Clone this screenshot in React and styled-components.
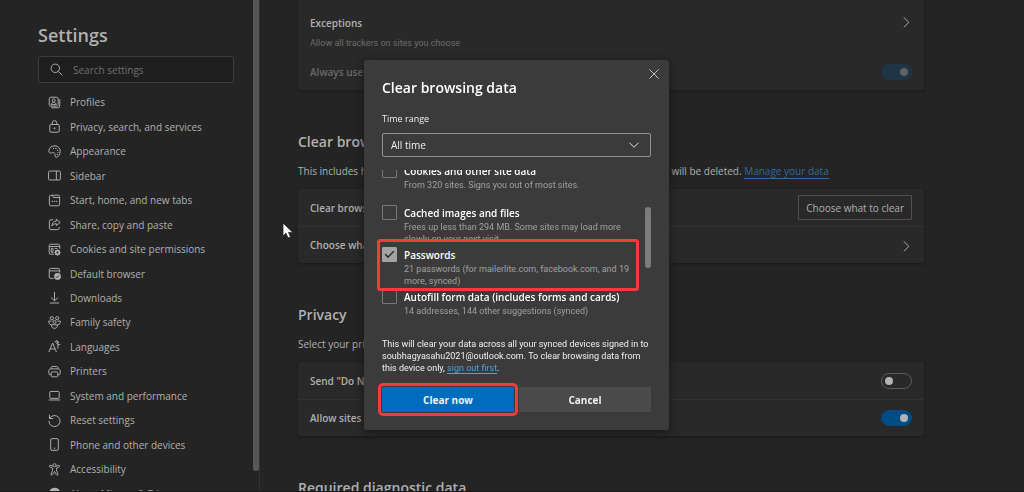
import React, { useState } from 'react';
import styled, { createGlobalStyle, css } from 'styled-components';

const fontStack = '"Open Sans", "Noto Sans", sans-serif';
const smallFont = 'Roboto, "Open Sans", sans-serif';
const pageColor = '#242424';
const cardColor = '#292929';
const dialogColor = '#3b3b3b';
const markColor = '#f23b3b';

const icons = {
  profiles: (
    <>
      <rect x="1.5" y="1.5" width="11" height="11" rx="2" />
      <path d="M14.5 4v8.3a2.2 2.2 0 0 1-2.2 2.2H4" />
      <circle cx="7" cy="5.4" r="1.8" />
      <path d="M3.8 10.6c.3-3.4 6.1-3.4 6.4 0z" />
    </>
  ),
  lock: (
    <>
      <rect x="2.2" y="5.5" width="11.6" height="9.5" rx="1.5" />
      <path d="M5.2 5.5V3.6a2.8 2.8 0 0 1 5.6 0v1.9" />
      <circle cx="8" cy="10.2" r="0.7" fill="currentColor" />
    </>
  ),
  palette: (
    <>
      <path d="M1 7.6C1.2 3.2 5 .8 8.6 1c4 .2 6.6 3.4 6.4 7.2-.2 3.8-2.4 6.8-4.6 6.8-2.3 0-1.3-2.6-2-4.4-.8-2-2.3-1.2-4-.8C2.4 10.3.9 9.5 1 7.6z" />
      <path d="M6.8 4.2h.1M9.7 4.2h.1M11.8 6.2h.1M12.3 9h.1M11.4 11.6h.1" strokeWidth="1.5" strokeLinecap="round" />
    </>
  ),
  sidebar: (
    <>
      <rect x="0.7" y="2.5" width="14.6" height="11" rx="1.5" />
      <path d="M10.3 2.5v11" />
    </>
  ),
  tabs: (
    <>
      <rect x="1.7" y="1.5" width="12.6" height="13" rx="1.8" />
      <path d="M5.8 1.5v1.3c0 1 .5 1.5 1.5 1.5h7" />
      <path d="M4.5 9h1.5M7.3 9h1.5M10 9h1.5" strokeWidth="1.6" />
    </>
  ),
  share: (
    <>
      <path d="M6.5 2.2H3.7a2 2 0 0 0-2 2v8.1a2 2 0 0 0 2 2h8.1a2 2 0 0 0 2-2V11" />
      <path d="M10.2 1.5 15 5.4l-4.8 3.9V7C7.6 7 6 8 4.8 10c.2-3.6 2-6 5.4-6.2z" />
    </>
  ),
  cookies: (
    <>
      <path d="M7.5 13.8H3.2a1.7 1.7 0 0 1-1.7-1.7V3.2c0-1 .7-1.7 1.7-1.7h9.6c1 0 1.7.7 1.7 1.7v4" />
      <path d="M1.5 4.3h13M4 6.5h2.2v5H4zM8.3 6.7h3.2" />
      <circle cx="11.7" cy="11.7" r="2.3" strokeWidth="2" />
      <path d="M11.7 7.8v2M11.7 13.6v2M7.8 11.7h2M13.6 11.7h2M9 9l1.2 1.2M14.4 9l-1.2 1.2M9 14.4l1.2-1.2M14.4 14.4l-1.2-1.2" />
    </>
  ),
  browser: (
    <>
      <path d="M6.8 14H3.3a1.8 1.8 0 0 1-1.8-1.8V3.5c0-1 .8-1.8 1.8-1.8h9.2c1 0 1.8.8 1.8 1.8v3.3M1.5 4.8h12.8" />
      <circle cx="11.7" cy="11.6" r="4.2" fill="currentColor" stroke="none" />
      <path d="m9.8 11.7 1.3 1.3 2.5-2.6" stroke={pageColor} />
    </>
  ),
  download: <path d="M8 1v11M3.8 8 8 12.2 12.2 8M2.2 14.8h11.6" />,
  family: (
    <>
      <circle cx="4.7" cy="2.7" r="2" />
      <circle cx="11.3" cy="2.7" r="2" />
      <circle cx="8" cy="7.3" r="1.9" />
      <path d="M4.2 6.3H.8c-.2 2.5 1 4.3 3.2 4.5M11.8 6.3h3.4c.2 2.5-1 4.3-3.2 4.5M4.3 10.8h7.4c.2 2.8-1.3 4.4-3.7 4.4s-3.9-1.6-3.7-4.4z" />
    </>
  ),
  languages: (
    <>
      <path d="M1 14.8 5.7 3.8l4.7 11M2.7 11h6" />
      <path d="M7.8 2.2h4.4v8.3M12.2 5.5H15M10.2.6l2.6 1.6-2.6 3" />
    </>
  ),
  printer: (
    <>
      <path d="M3.8 12H2.6C1.6 12 1 11.4 1 10.4V7c0-1.3.8-2.2 2.2-2.2h9.6C14.2 4.8 15 5.7 15 7v3.4c0 1-.6 1.6-1.6 1.6h-1.2" />
      <path d="M3.8 4.8V3.4c0-1 .6-1.6 1.5-1.6h5.4c.9 0 1.5.6 1.5 1.6v1.4" />
      <rect x="4" y="8.5" width="8" height="6" rx="1.2" />
    </>
  ),
  laptop: (
    <>
      <rect x="2.2" y="3" width="11.6" height="8.5" rx="1.2" />
      <path d="M.8 13.5h14.4" />
    </>
  ),
  reset: <path d="M1.8 1v4.6h4.6M2 5.5A6.8 6.8 0 1 1 1.2 8.5" />,
  phone: (
    <>
      <rect x="3.3" y="0.8" width="9.4" height="14.4" rx="1.6" />
      <path d="M7 12.5h2" />
    </>
  ),
  accessibility: (
    <>
      <circle cx="8" cy="2.7" r="1.9" />
      <path d="M6.2 4 3 2.9c-1.3-.4-2 1.3-.8 1.9l3.3 1.5v3L3.8 13.5c-.5 1.4 1.3 2.2 1.9.8L8 10.5l2.3 3.8c.6 1.4 2.4.6 1.9-.8L10.5 9.3v-3l3.3-1.5c1.2-.6.5-2.3-.8-1.9L9.8 4" />
    </>
  ),
  edge: (
    <path
      d="M1 8.5C1 4 4.4 1 8.3 1 12.3 1 15 3.8 15 6.8c0 2.2-1.6 3.4-3.5 3.4-1.5 0-2.5-.5-2.5-1.2 0-.5.5-.8.5-1.6 0-1.2-1.2-2.3-3-2.3C4 5.1 1.5 6.5 1 8.5zM1.2 9c1-2.5 2.8-3.3 4.2-3.2C4 8 4.5 12.5 9 14.9 4.8 15.5 1.4 12.6 1.2 9z"
      fill="currentColor"
      stroke="none"
    />
  ),
  search: (
    <>
      <circle cx="6.5" cy="6.5" r="5.2" />
      <path d="m10.4 10.4 4.8 4.8" />
    </>
  ),
  right: <path d="m6 3 6 6-6 6" />,
  down: <path d="m2 5 6 6 6-6" />,
  close: <path d="m2 2 12 12M14 2 2 14" />,
};

const menu = [
  ['profiles', 'Profiles'],
  ['lock', 'Privacy, search, and services'],
  ['palette', 'Appearance'],
  ['sidebar', 'Sidebar'],
  ['tabs', 'Start, home, and new tabs'],
  ['share', 'Share, copy and paste'],
  ['cookies', 'Cookies and site permissions'],
  ['browser', 'Default browser'],
  ['download', 'Downloads'],
  ['family', 'Family safety'],
  ['languages', 'Languages'],
  ['printer', 'Printers'],
  ['laptop', 'System and performance'],
  ['reset', 'Reset settings'],
  ['phone', 'Phone and other devices'],
  ['accessibility', 'Accessibility'],
  ['edge', 'About Microsoft Edge'],
];

const dataTypes = [
  { id: 'cookies', title: 'Cookies and other site data', text: 'From 320 sites. Signs you out of most sites.' },
  { id: 'cache', title: 'Cached images and files', text: 'Frees up less than 294 MB. Some sites may load more slowly on your next visit.' },
  { id: 'passwords', title: 'Passwords', text: '21 passwords (for mailerlite.com, facebook.com, and 19 more, synced)', marked: true },
  { id: 'autofill', title: 'Autofill form data (includes forms and cards)', text: '14 addresses, 144 other suggestions (synced)' },
];

const Icon = ({ name, size = 13 }) => (
  <Svg width={size} height={size} viewBox="0 0 16 16" aria-hidden="true">
    {icons[name]}
  </Svg>
);

const App = () => {
  const [checked, setChecked] = useState({ passwords: true });
  const [doNotTrack, setDoNotTrack] = useState(false);
  const [payment, setPayment] = useState(true);

  const toggleType = (id) => {
    setChecked({ ...checked, [id]: !checked[id] });
  }

  return (
    <>
      <GlobalStyle />
      <Page>
        <Sidebar>
          <SidebarTitle>Settings</SidebarTitle>
          <SearchBox>
            <Icon name="search" />
            <SearchInput type="text" placeholder="Search settings" aria-label="Search settings" />
          </SearchBox>
          <Menu>
            {menu.map(([icon, label]) => (
              <MenuLink href="#" key={label}>
                <Icon name={icon} />
                {label}
              </MenuLink>
            ))}
          </Menu>
        </Sidebar>
        <SidebarScroll>
          <SidebarThumb />
        </SidebarScroll>

        <Main>
          <Card $cut>
            <TallRow>
              <div>
                <RowTitle>Exceptions</RowTitle>
                <RowHint>Allow all trackers on sites you choose</RowHint>
              </div>
              <Icon name="right" />
            </TallRow>
            <Row>
              <RowTitle as="label" htmlFor="strict" $dim>Always use "Strict" tracking prevention</RowTitle>
              <Switch id="strict" type="checkbox" role="switch" checked disabled readOnly />
            </Row>
          </Card>

          <Heading>Clear browsing data</Heading>
          <Paragraph>
            <span>This includes history, passwords, cookies, and more. Only data from this profile</span>
            <span>will be deleted. <Link href="#">Manage your data</Link></span>
          </Paragraph>
          <Card>
            <Row>
              <RowTitle>Clear browsing data now</RowTitle>
              <OutlineButton type="button">Choose what to clear</OutlineButton>
            </Row>
            <Row $line>
              <RowTitle>Choose what to clear every time</RowTitle>
              <Icon name="right" />
            </Row>
          </Card>

          <Heading>Privacy</Heading>
          <Paragraph>Select your privacy settings</Paragraph>
          <Card>
            <Row>
              <RowTitle as="label" htmlFor="dnt">Send "Do Not Track" requests</RowTitle>
              <Switch id="dnt" type="checkbox" role="switch" checked={doNotTrack} onChange={() => setDoNotTrack(!doNotTrack)} />
            </Row>
            <Row $line>
              <RowTitle as="label" htmlFor="payment">Allow sites to check for payments</RowTitle>
              <Switch id="payment" type="checkbox" role="switch" checked={payment} onChange={() => setPayment(!payment)} />
            </Row>
          </Card>

          <Heading>Required diagnostic data</Heading>
        </Main>
      </Page>

      <Overlay>
        <Dialog role="dialog" aria-labelledby="dialog-title">
          <CloseButton type="button" aria-label="Close"><Icon name="close" size={12} /></CloseButton>
          <DialogTitle id="dialog-title">Clear browsing data</DialogTitle>
          <RangeLabel htmlFor="range">Time range</RangeLabel>
          <SelectBox>
            <Select id="range" defaultValue="all">
              <option value="hour">Last hour</option>
              <option value="all">All time</option>
            </Select>
            <Icon name="down" size={12} />
          </SelectBox>

          <TypeArea>
            <TypeList>
              {dataTypes.map((type) => (
                <TypeItem key={type.id} $marked={type.marked}>
                  <CheckBox
                    id={type.id}
                    type="checkbox"
                    checked={!!checked[type.id]}
                    onChange={() => toggleType(type.id)}
                  />
                  <TypeLabel htmlFor={type.id}>
                    <TypeTitle>{type.title}</TypeTitle>
                    <TypeText>{type.text}</TypeText>
                  </TypeLabel>
                </TypeItem>
              ))}
            </TypeList>
            <TypeThumb />
          </TypeArea>

          <Notice>
            This will clear your data across all your synced devices signed in to
            soubhagyasahu2021@outlook.com. To clear browsing data from
            this device only, <Link href="#" $bright>sign out first</Link>.
          </Notice>
          <Buttons>
            <Button type="button" $primary>Clear now</Button>
            <Button type="button">Cancel</Button>
          </Buttons>
        </Dialog>
      </Overlay>

      <Cursor width="12" height="17" viewBox="0 0 12 17" aria-hidden="true">
        <path d="M1 1v13l3-2.8L6 16l2.5-1.1L6.5 10.4h4.3z" fill="#fff" stroke="#222" strokeWidth="0.8" />
      </Cursor>
    </>
  )
}

const GlobalStyle = createGlobalStyle`
  * {
    box-sizing: border-box;
  }
  body {
    margin: 0;
    background: ${pageColor};
    color: #b0b0b0;
    font-family: ${fontStack};
    font-size: 10px;
    overflow: hidden;
  }
  button, input, select {
    font-family: inherit;
    margin: 0;
  }
`

const Svg = styled.svg`
  flex: none;
  fill: none;
  stroke: currentColor;
  stroke-width: 1.2;
`

const Page = styled.div`
  display: flex;
  height: 100vh;
  overflow: hidden;
  border-bottom: 1px solid #1b1b1b;
`

const Sidebar = styled.aside`
  display: flex;
  flex-direction: column;
  flex: none;
  width: 253px;
  padding: 24px 19px 0 38px;
  overflow: hidden;
`

const SidebarTitle = styled.h1`
  margin: 0 0 10px;
  font-size: 18px;
  line-height: 22px;
  font-weight: 600;
`

const SearchBox = styled.div`
  display: flex;
  align-items: center;
  flex: none;
  gap: 10px;
  height: 27px;
  padding: 0 11px;
  border: 1px solid #3d3d3d;
  border-radius: 2px;
  background: #1e1e1e;
`

const SearchInput = styled.input`
  flex: 1;
  min-width: 0;
  padding: 0;
  border: none;
  outline: none;
  background: none;
  color: #b0b0b0;
  font-size: 10px;
  &::placeholder {
    color: #707070;
  }
`

const Menu = styled.nav`
  display: grid;
  grid-template-rows: repeat(17, 1fr);
  flex: none;
  height: 416px;
  margin-top: 7px;
`

const MenuLink = styled.a`
  display: flex;
  align-items: center;
  gap: 9px;
  padding-left: 10px;
  color: inherit;
  text-decoration: none;
`

const SidebarScroll = styled.div`
  flex: none;
  width: 7px;
  border-right: 1px solid #333;
`

const SidebarThumb = styled.div`
  width: 6px;
  height: 96%;
  border-radius: 0 0 3px 3px;
  background: #575757;
`

const Main = styled.main`
  flex: 1;
  min-width: 0;
  padding: 0 100px 0 38px;
`

const Card = styled.section`
  border-radius: ${props => props.$cut ? '0 0 3px 3px' : '3px'};
  background: ${cardColor};
  box-shadow: 0 1px 3px #1a1a1a;
`

const Row = styled.div`
  display: flex;
  align-items: center;
  justify-content: space-between;
  height: 37px;
  padding: 0 12px;
  border-top: ${props => props.$line ? '1px solid #323232' : 'none'};
`

const TallRow = styled(Row)`
  align-items: flex-start;
  height: 53px;
  padding-top: 15px;
`

const RowTitle = styled.div`
  font-size: 10px;
  line-height: 16px;
  font-weight: 600;
  color: ${props => props.$dim ? '#6a6a6a' : '#b0b0b0'};
`

const RowHint = styled.div`
  margin-top: 5px;
  font-family: ${smallFont};
  font-size: 9px;
  line-height: 14px;
  color: #6c6c6c;
`

const Heading = styled.h2`
  margin: 42px 0 10px;
  font-size: 14px;
  line-height: 20px;
  font-weight: 600;
`

const Paragraph = styled.p`
  display: flex;
  gap: 5px;
  margin: 0 0 8px;
  line-height: 19px;
  white-space: nowrap;
`

const Link = styled.a`
  border-bottom: 1px solid;
  color: ${props => props.$bright ? '#5a9fd0' : '#32699a'};
  text-decoration: none;
`

const OutlineButton = styled.button`
  height: 25px;
  padding: 0 7px;
  border: 1px solid #505050;
  border-radius: 1px;
  background: ${cardColor};
  color: #b0b0b0;
  font-size: 10px;
`

const Switch = styled.input`
  appearance: none;
  display: flex;
  align-items: center;
  width: 31px;
  height: 16px;
  padding: 0 3px;
  border: 1px solid #5c5c5c;
  border-radius: 8px;
  &::before {
    content: '';
    width: 8px;
    height: 8px;
    border-radius: 50%;
    background: #b4b4b4;
  }
  &:checked {
    justify-content: flex-end;
    border-color: #004c87;
    background: #004c87;
  }
  &:disabled {
    border-color: #1e3546;
    background: #1e3546;
  }
  &:disabled::before {
    background: #5e6265;
  }
`

const Overlay = styled.div`
  position: fixed;
  inset: 0;
  display: flex;
  align-items: center;
  justify-content: center;
  padding: 0 0 2px 9px;
`

const Dialog = styled.div`
  position: relative;
  display: flex;
  flex-direction: column;
  width: 305px;
  padding: 18px;
  border-radius: 3px;
  background: ${dialogColor};
  color: #f0f0f0;
  box-shadow: 0 2px 10px #161616;
`

const CloseButton = styled.button`
  position: absolute;
  top: 7px;
  right: 8px;
  display: flex;
  padding: 1px;
  border: none;
  background: none;
  color: #d0d0d0;
`

const DialogTitle = styled.h2`
  margin: 0 0 13px;
  font-size: 14px;
  line-height: 20px;
  font-weight: 600;
  color: #fff;
`

const RangeLabel = styled.label`
  margin-bottom: 6px;
  font-size: 9px;
  line-height: 16px;
`

const SelectBox = styled.div`
  display: grid;
  align-items: center;
  justify-items: end;
  svg {
    grid-area: 1 / 1;
    margin-right: 11px;
    pointer-events: none;
  }
`

const Select = styled.select`
  appearance: none;
  grid-area: 1 / 1;
  width: 100%;
  height: 24px;
  padding: 0 8px;
  border: 1px solid #929292;
  border-radius: 2px;
  background: ${dialogColor};
  color: #f0f0f0;
  font-size: 10px;
`

const TypeArea = styled.div`
  display: flex;
  justify-content: space-between;
  height: 161px;
  margin: 13px 0 7px -6px;
  overflow: hidden;
`

const TypeList = styled.div`
  display: flex;
  flex-direction: column;
  justify-content: flex-end;
  width: 260px;
  padding-left: 6px;
`

const TypeItem = styled.div`
  display: flex;
  flex: none;
  gap: 7px;
  height: 42px;
  ${props => props.$marked && css`
    position: relative;
    z-index: 1;
    &::before {
      content: '';
      position: absolute;
      z-index: -1;
      inset: -8px -3px -2px -5px;
      border: 3px solid ${markColor};
      border-radius: 3px;
      background: ${dialogColor};
    }
  `}
`

const CheckBox = styled.input`
  appearance: none;
  display: grid;
  place-items: center;
  flex: none;
  width: 15px;
  height: 15px;
  border: 1px solid #787878;
  border-radius: 1px;
  &:checked {
    border-color: #a3a3a3;
    background: #a3a3a3;
  }
  &:checked::before {
    content: '';
    width: 10px;
    height: 8px;
    background: #333;
    clip-path: polygon(0 52%, 12% 38%, 36% 68%, 88% 0, 100% 12%, 36% 96%);
  }
`

const TypeLabel = styled.label`
  min-width: 0;
`

const TypeTitle = styled.div`
  font-size: 10px;
  line-height: 16px;
  font-weight: 600;
  color: #fff;
  white-space: nowrap;
`

const TypeText = styled.div`
  font-family: ${smallFont};
  font-size: 9px;
  line-height: 12px;
  color: #a0a0a0;
`

const TypeThumb = styled.div`
  width: 6px;
  height: 61px;
  margin-top: 37px;
  border-radius: 3px;
  background: #7c7c7c;
`

const Notice = styled.p`
  margin: 0 0 13px;
  font-family: ${smallFont};
  font-size: 9px;
  line-height: 12px;
`

const Buttons = styled.div`
  display: grid;
  grid-template-columns: 1fr 1fr;
  gap: 5px;
`

const Button = styled.button`
  height: 25px;
  border: none;
  background: #4b4b4b;
  color: #f0f0f0;
  font-size: 10px;
  font-weight: 700;
  ${props => props.$primary && css`
    z-index: 1;
    border-radius: 1px;
    background: #006cbe;
    outline: 3px solid ${markColor};
    outline-offset: 1px;
  `}
`

const Cursor = styled.svg`
  position: fixed;
  left: 282px;
  top: 222px;
`

export default App;
